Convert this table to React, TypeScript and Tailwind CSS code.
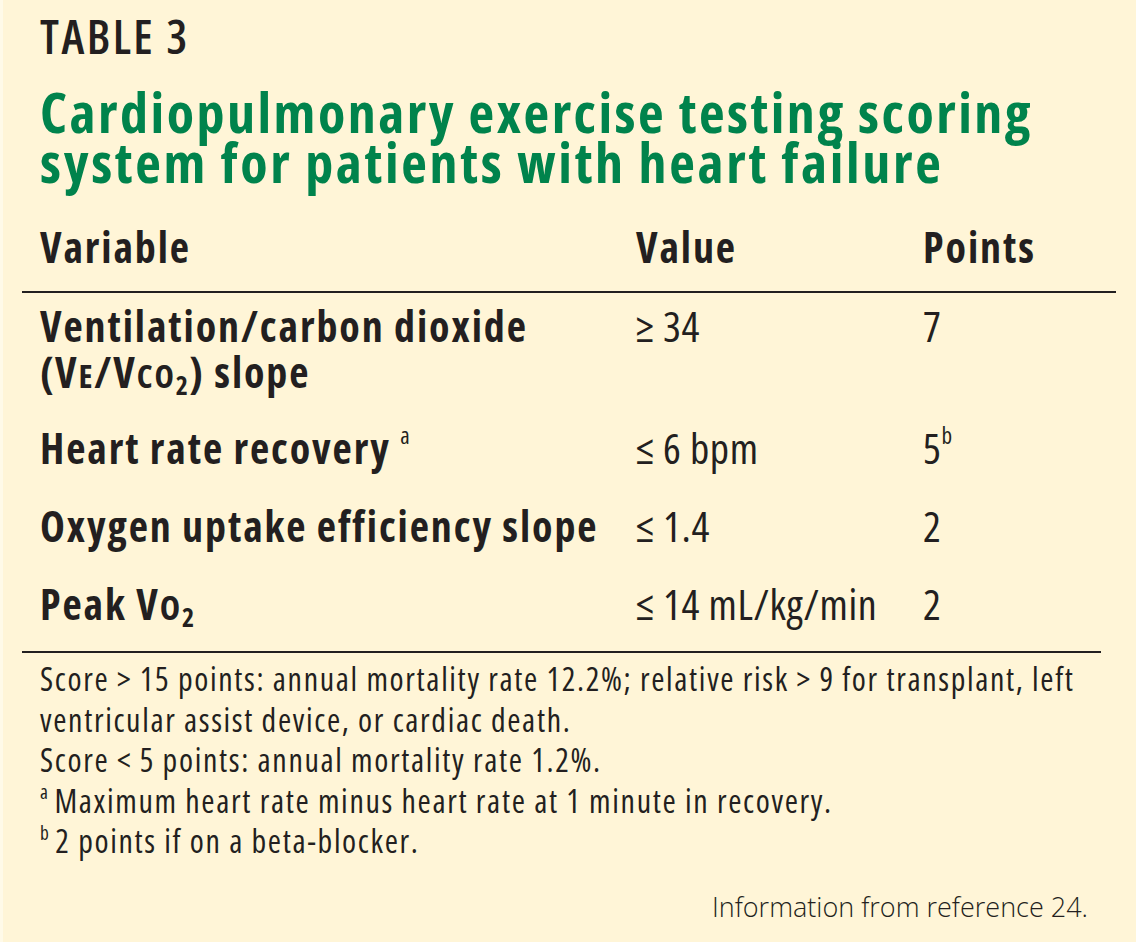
import React from "react";

const rows = [
  {
    mt: "mt-0",
    variable: (
      <>
        Ventilation/carbon dioxide
        <br />
        (V<span className="text-[0.78em]">E</span>/V<span className="text-[0.78em]">CO</span>
        <sub className="text-[0.62em]">2</sub>) slope
      </>
    ),
    value: "≥ 34",
    points: <>7</>,
  },
  {
    mt: "mt-[26px]",
    variable: (
      <>
        Heart rate recovery <sup className="text-[0.55em] font-normal -top-[0.85em]">a</sup>
      </>
    ),
    value: "≤ 6 bpm",
    points: (
      <>
        5<sup className="text-[0.55em] -top-[0.85em]">b</sup>
      </>
    ),
  },
  {
    mt: "mt-[32px]",
    variable: <>Oxygen uptake efficiency slope</>,
    value: "≤ 1.4",
    points: <>2</>,
  },
  {
    mt: "mt-[32px]",
    variable: (
      <>
        Peak V<span className="text-[0.82em]">O</span>
        <sub className="text-[0.62em]">2</sub>
      </>
    ),
    value: "≤ 14 mL/kg/min",
    points: <>2</>,
  },
];

export default function App() {
  return (
    <div className="w-[1136px] h-[942px] overflow-hidden bg-[#fff5d7] text-[#231f20] font-['Open_Sans',sans-serif] font-stretch-[75%] border-l-[3px] border-[#fffae8]">
      <div className="pl-[37px] pt-[12px] text-[47px] leading-[48px] font-semibold tracking-[2.5px]">
        TABLE 3
      </div>
      <h1 className="mt-[26px] pl-[37px] text-[56px] leading-[50px] font-bold tracking-[2.5px] text-[#00834c] whitespace-nowrap">
        Cardiopulmonary exercise testing scoring
        <br />
        <span className="tracking-[2.7px]">system for patients with heart failure</span>
      </h1>
      <div className="mt-[37px] grid grid-cols-[596px_287px_1fr] pl-[37px] text-[42px] leading-[48px] font-bold tracking-[1.9px]">
        <div>Variable</div>
        <div>Value</div>
        <div>Points</div>
      </div>
      <div className="mt-[20px] ml-[19px] w-[1094px] h-[2px] bg-[#231f20]" />
      <div className="flex flex-col pt-[10px] pb-[21px]">
        {rows.map((r, i) => (
          <div key={i} className={`${r.mt} grid grid-cols-[596px_287px_1fr] pl-[37px] text-[42px] leading-[46px] whitespace-nowrap`}>
            <div className="font-bold tracking-[1.9px]">{r.variable}</div>
            <div className="font-normal tracking-[0.65px]">{r.value}</div>
            <div className="font-normal tracking-[0.65px]">{r.points}</div>
          </div>
        ))}
      </div>
      <div className="ml-[19px] w-[1079px] h-[2px] bg-[#231f20]" />
      <div className="mt-[6px] pl-[37px] text-[32px] leading-[40.5px] tracking-[1.65px] whitespace-nowrap">
        <p>
          Score &gt; 15 points: annual mortality rate 12.2%; relative risk &gt; 9 for transplant, left
          <br />
          ventricular assist device, or cardiac death.
        </p>
        <p>Score &lt; 5 points: annual mortality rate 1.2%.</p>
        <p>
          <sup className="text-[0.6em] -top-[0.7em]">a</sup>&#8202;Maximum heart rate minus heart rate at 1 minute in recovery.
        </p>
        <p>
          <sup className="text-[0.6em] -top-[0.7em]">b</sup>&#8202;2 points if on a beta-blocker.
        </p>
      </div>
      <div className="mt-[27px] pr-[48px] text-right text-[27px] leading-[36px] font-light font-stretch-[100%]">
        Information from reference 24.
      </div>
    </div>
  );
}
